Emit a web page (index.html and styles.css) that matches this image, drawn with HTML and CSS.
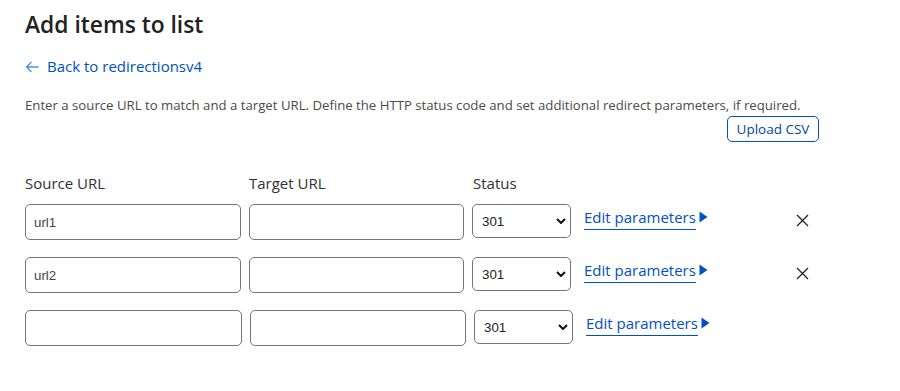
FILE: index.html
```html
<!DOCTYPE html>
<html lang="en">
<head>
<meta charset="utf-8">
<title>Add items to list</title>
<link rel="stylesheet" href="styles.css">
</head>
<body>
<main class="page">
  <h1 class="title">Add items to list</h1>
  <a class="back" href="#"><svg class="back-arrow" width="14" height="12" viewBox="0 0 14 12"><path d="M13.5 6H1.5M6.5 1L1.5 6L6.5 11" fill="none" stroke="#4d8ee6" stroke-width="1.3"/></svg>Back to redirectionsv4</a>
  <div class="intro">
    <p class="desc">Enter a source URL to match and a target URL. Define the HTTP status code and set additional redirect parameters, if required.</p>
    <div class="upload-wrap"><button class="btn-outline" type="button">Upload CSV</button></div>
  </div>
  <div class="labels">
    <span class="label label-src">Source URL</span>
    <span class="label label-tgt">Target URL</span>
    <span class="label">Status</span>
  </div>
  <div class="row">
    <input class="field field-src" type="text" value="url1">
    <input class="field field-tgt" type="text" value="">
    <div class="select-wrap">
      <select class="status"><option>301</option><option>302</option></select>
      <svg class="chev" width="10" height="6" viewBox="0 0 10 6"><path d="M1 1l4 4 4-4" fill="none" stroke="#111" stroke-width="2"/></svg>
    </div>
    <a class="edit" href="#"><span class="edit-text">Edit parameters</span><svg class="tri" width="9" height="12" viewBox="0 0 9 12"><path d="M0.5 0.5L8.5 6L0.5 11.5Z" fill="#0051c3"/></svg></a>
    <button class="remove" type="button" aria-label="Remove"><svg width="13" height="13" viewBox="0 0 13 13"><path d="M1 1L12 12M12 1L1 12" stroke="#222" stroke-width="1.3"/></svg></button>
  </div>
  <div class="row">
    <input class="field field-src" type="text" value="url2">
    <input class="field field-tgt" type="text" value="">
    <div class="select-wrap">
      <select class="status"><option>301</option><option>302</option></select>
      <svg class="chev" width="10" height="6" viewBox="0 0 10 6"><path d="M1 1l4 4 4-4" fill="none" stroke="#111" stroke-width="2"/></svg>
    </div>
    <a class="edit" href="#"><span class="edit-text">Edit parameters</span><svg class="tri" width="9" height="12" viewBox="0 0 9 12"><path d="M0.5 0.5L8.5 6L0.5 11.5Z" fill="#0051c3"/></svg></a>
    <button class="remove" type="button" aria-label="Remove"><svg width="13" height="13" viewBox="0 0 13 13"><path d="M1 1L12 12M12 1L1 12" stroke="#222" stroke-width="1.3"/></svg></button>
  </div>
  <div class="row row-new">
    <input class="field field-src" type="text" value="">
    <input class="field field-tgt" type="text" value="">
    <div class="select-wrap">
      <select class="status"><option>301</option><option>302</option></select>
      <svg class="chev" width="10" height="6" viewBox="0 0 10 6"><path d="M1 1l4 4 4-4" fill="none" stroke="#111" stroke-width="2"/></svg>
    </div>
    <a class="edit" href="#"><span class="edit-text">Edit parameters</span><svg class="tri" width="9" height="12" viewBox="0 0 9 12"><path d="M0.5 0.5L8.5 6L0.5 11.5Z" fill="#0051c3"/></svg></a>
  </div>
</main>
</body>
</html>
```

FILE: styles.css
```css
html, body {
  margin: 0;
  padding: 0;
  background: #fff;
}
body {
  font-family: "Open Sans", "Noto Sans", sans-serif;
  color: #313131;
}
.page {
  padding: 9px 25px 0 25px;
  width: 794px;
}
.title {
  margin: 0;
  font-size: 22.8px;
  line-height: 32px;
  font-weight: 600;
  color: #222;
}
.back {
  display: flex;
  width: fit-content;
  align-items: center;
  height: 22px;
  margin-top: 14px;
  font-size: 15px;
  line-height: 22px;
  color: #0051c3;
  text-decoration: none;
}
.back-arrow {
  margin-right: 8px;
  margin-top: 2px;
}
.intro {
  margin-top: 19px;
}
.desc {
  margin: 0;
  font-size: 13.2px;
  line-height: 18px;
  color: #4a4a4a;
  white-space: nowrap;
}
.upload-wrap {
  display: flex;
  justify-content: flex-end;
  margin-top: 2px;
}
.btn-outline {
  font-family: "Open Sans", "Noto Sans", sans-serif;
  font-size: 13.5px;
  color: #0045a6;
  background: #fff;
  border: 1px solid #0051c3;
  border-radius: 5px;
  height: 26px;
  width: 92px;
  padding: 0;
  line-height: 22px;
}
.labels {
  display: flex;
  margin-top: 30px;
  font-size: 15px;
  line-height: 22px;
  color: #313131;
}
.label-src { width: 224px; }
.label-tgt { width: 224px; }
.row {
  display: flex;
  align-items: flex-start;
  margin-top: 10px;
  height: 36px;
}
.row + .row { margin-top: 17px; }
.field {
  box-sizing: border-box;
  height: 36px;
  border: 1px solid #767676;
  border-radius: 5px;
  padding: 0 8px;
  font-family: "Liberation Sans", Arial, sans-serif;
  font-size: 13.3px;
  color: #444;
  background: #fff;
  margin: 0;
}
.field-src { width: 216px; }
.field-tgt { width: 215px; margin-left: 8px; }
.row-new .field-src { width: 217px; }
.row-new .field-tgt { width: 216px; margin-left: 8px; }
.select-wrap {
  position: relative;
  margin-left: 8px;
  width: 99px;
  height: 34px;
}
.status {
  appearance: none;
  -webkit-appearance: none;
  box-sizing: border-box;
  width: 99px;
  height: 34px;
  border: 1px solid #767676;
  border-radius: 5px;
  padding: 0 0 0 9px;
  font-family: "Liberation Sans", Arial, sans-serif;
  font-size: 13.3px;
  color: #222;
  background: #fff;
  margin: 0;
}
.chev {
  position: absolute;
  left: 84px;
  top: 14px;
  pointer-events: none;
}
.edit {
  display: flex;
  align-items: center;
  margin-left: 13px;
  margin-top: 3px;
  text-decoration: none;
  color: #0051c3;
  font-size: 15px;
  line-height: 20px;
}
.edit-text {
  border-bottom: 1px solid #0051c3;
  padding-bottom: 2px;
}
.tri {
  margin-left: 3px;
  margin-top: -3px;
}
.remove {
  margin-left: auto;
  margin-right: 10px;
  margin-top: 10px;
  width: 13px;
  height: 13px;
  padding: 0;
  border: 0;
  background: transparent;
  display: flex;
}
```
